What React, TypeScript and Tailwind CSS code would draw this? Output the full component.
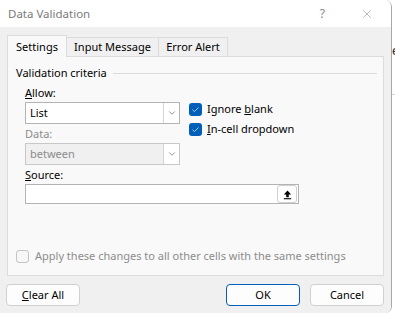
import { ChevronDown, X } from "lucide-react";

const font = { fontFamily: '"Noto Sans", "Open Sans", sans-serif' };

function Check({ checked, disabled }: { checked?: boolean; disabled?: boolean }) {
  if (checked) {
    return (
      <span className="flex h-[13px] w-[13px] shrink-0 items-center justify-center rounded-[3px] bg-[#005fb8]">
        <svg viewBox="0 0 12 12" className="h-[9px] w-[9px]">
          <path d="M2 6.3l2.6 2.5L10 3.4" fill="none" stroke="#cfe3f7" strokeWidth="1.1" />
        </svg>
      </span>
    );
  }
  return (
    <span
      className={`h-[13px] w-[13px] shrink-0 rounded-[3px] border ${
        disabled ? "border-[#c4c4c4] bg-[#f7f7f7]" : "border-[#8a8a8a] bg-white"
      }`}
    />
  );
}

function Select({ value, disabled }: { value: string; disabled?: boolean }) {
  return (
    <div
      className={`flex h-[22px] w-[155px] items-center border ${
        disabled ? "border-[#c8c8c8] bg-[#f0f0f0] text-[#8c8c8c]" : "border-[#b4b4b4] bg-white text-black"
      }`}
    >
      <span className="flex-1 pl-[4px]">{value}</span>
      <span className="flex h-[20px] w-[16px] items-center justify-center border-l border-[#d4d4d4] bg-white">
        <ChevronDown className="h-[10px] w-[10px] text-[#555]" strokeWidth={1.5} />
      </span>
    </div>
  );
}

function Button({ children, primary }: { children: React.ReactNode; primary?: boolean }) {
  return (
    <button
      className={`flex h-[22px] w-[74px] items-center justify-center rounded-[4px] border bg-[#fdfdfd] text-[11px] text-black ${
        primary ? "border-[#005fb8]" : "border-[#d0d0d0]"
      }`}
    >
      {children}
    </button>
  );
}

export default function App() {
  return (
    <div className="flex h-[313px] w-[395px] bg-white text-[11px] leading-[16px]" style={font}>
      <div className="flex w-[392px] shrink-0 flex-col overflow-hidden rounded-r-[7px] border-r border-[#a8a8a8]">
        {/* title bar */}
        <div className="flex h-[27px] shrink-0 items-center bg-white pl-[8px] text-[#7b7b7b]">
          <span className="flex-1 text-[11.5px]">Data Validation</span>
          <span className="mr-[35px] text-[12px] text-[#8a8a8a]">?</span>
          <X className="mr-[17px] h-[14px] w-[14px] text-[#8a8a8a]" strokeWidth={1} />
        </div>

        <div className="flex flex-1 flex-col bg-[#f0f0f0] px-[7px] pt-[8px]">
          {/* tabs */}
          <div className="relative z-10 flex h-[21px] items-end">
            <div className="-mb-px flex h-[22px] w-[60px] items-center justify-center border border-b-0 border-[#dcdcdc] bg-[#f9f9f9]">
              Settings
            </div>
            <div className="flex h-[19px] w-[92px] items-center justify-center border border-l-0 border-b-0 border-[#dcdcdc] bg-[#f0f0f0]">
              Input Message
            </div>
            <div className="flex h-[19px] w-[69px] items-center justify-center border border-l-0 border-b-0 border-[#dcdcdc] bg-[#f0f0f0]">
              Error Alert
            </div>
          </div>

          {/* panel */}
          <div className="flex h-[220px] flex-col border border-[#dcdcdc] bg-[#f9f9f9] pl-[8px] pr-[6px] pt-[8px]">
            <div className="flex h-[16px] items-center">
              <span className="mr-[6px]">Validation criteria</span>
              <span className="h-px flex-1 bg-[#dcdcdc]" />
            </div>

            <div className="flex pl-[9px] pt-[4px]">
              <div className="flex w-[155px] flex-col">
                <span className="h-[17px]">
                  <u>A</u>llow:
                </span>
                <Select value="List" />
                <span className="flex h-[19px] items-center text-[#8c8c8c]">Data:</span>
                <Select value="between" disabled />
              </div>
              <div className="ml-[9px] flex flex-col gap-[4px] pt-[16px]">
                <div className="flex items-center gap-[5px]">
                  <Check checked />
                  <span>
                    Ignore <u>b</u>lank
                  </span>
                </div>
                <div className="flex items-center gap-[5px]">
                  <Check checked />
                  <span>
                    <u>I</u>n-cell dropdown
                  </span>
                </div>
              </div>
            </div>

            <div className="flex flex-col pl-[9px] pt-[2px]">
              <span className="h-[17px]">
                <u>S</u>ource:
              </span>
              <div className="flex h-[20px] w-[274px] items-center justify-end border border-[#b4b4b4] bg-white pr-px">
                <span className="flex h-[18px] w-[20px] items-center justify-center rounded-[3px] border border-[#d0d0d0] bg-white">
                  <svg viewBox="0 0 12 12" className="h-[11px] w-[11px]">
                    <path d="M6 1.5L2 6h2.6v3h2.8V6H10z" fill="#000" />
                    <rect x="2" y="10" width="8" height="1.2" fill="#000" />
                  </svg>
                </span>
              </div>
            </div>

            <div className="mt-auto mb-[11px] flex items-center gap-[6px] whitespace-nowrap text-[#8c8c8c]">
              <Check disabled />
              <span>Apply these changes to all other cells with the same settings</span>
            </div>
          </div>

          {/* buttons */}
          <div className="flex items-center pt-[8px]">
            <div className="-ml-px">
              <Button>
                <u>C</u>lear All
              </Button>
            </div>
            <div className="flex-1" />
            <Button primary>OK</Button>
            <div className="w-[10px]" />
            <Button>Cancel</Button>
          </div>
        </div>
      </div>
      <div className="flex flex-1 flex-col overflow-hidden bg-white">
        <div className="h-[95px] border-b border-[#d4d4d4] text-[12px] leading-none">
          <div className="pt-[45px] text-[#222]">e</div>
        </div>
      </div>
    </div>
  );
}
